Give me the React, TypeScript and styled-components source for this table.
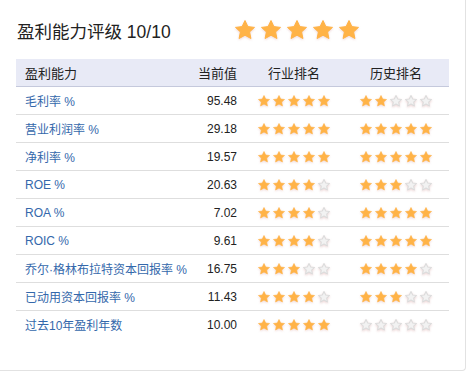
import React, { FunctionComponent } from "react";
import styled, { createGlobalStyle } from "styled-components";

const GlobalStyle = createGlobalStyle`
    body {
        margin: 0;
        background: #fff;
        font-family: "Liberation Sans", Arial, "Noto Sans CJK SC", sans-serif;
    }
`

interface Row {
    name: string;
    value: string;
    industry: number;
    history: number;
}

const rows: Row[] = [
    { name: "毛利率 %", value: "95.48", industry: 5, history: 2 },
    { name: "营业利润率 %", value: "29.18", industry: 5, history: 5 },
    { name: "净利率 %", value: "19.57", industry: 5, history: 5 },
    { name: "ROE %", value: "20.63", industry: 4, history: 3 },
    { name: "ROA %", value: "7.02", industry: 4, history: 5 },
    { name: "ROIC %", value: "9.61", industry: 4, history: 5 },
    { name: "乔尔·格林布拉特资本回报率 %", value: "16.75", industry: 3, history: 4 },
    { name: "已动用资本回报率 %", value: "11.43", industry: 4, history: 3 },
    { name: "过去10年盈利年数", value: "10.00", industry: 5, history: 0 },
];

const STAR = "12,2.5 14.9,8.6 21.5,9.4 16.6,13.9 17.9,20.5 12,17.2 6.1,20.5 7.4,13.9 2.5,9.4 9.1,8.6";

interface StarProps {
    on: boolean;
    size: number;
}

const Star: FunctionComponent<StarProps> = ({ on, size }) => (
    <StarSvg width={size} height={size} viewBox="0 0 24 24">
        <polygon
            points={STAR}
            fill={on ? "#ffb347" : "#f2f2f2"}
            stroke={on ? "#ffb347" : "#dcdcdc"}
            strokeWidth={on ? 1 : 1.8}
            strokeLinejoin="round"
        />
    </StarSvg>
);

const Stars: FunctionComponent<{ count: number; size?: number; big?: boolean }> = ({ count, size = 14, big }) => (
    <StarRow $big={big}>
        {[0, 1, 2, 3, 4].map(i => <Star key={i} on={i < count} size={size} />)}
    </StarRow>
);

const App: FunctionComponent = () => {
    return (
        <>
            <GlobalStyle />
            <Card>
                <TitleBar>
                    <Title>盈利能力评级 10/10</Title>
                    <Stars count={5} size={24} big />
                </TitleBar>
                <Table>
                    <HeadRow>
                        <HeadCell>盈利能力</HeadCell>
                        <HeadCell $align="right">当前值</HeadCell>
                        <HeadCell $align="center">行业排名</HeadCell>
                        <HeadCell $align="center">历史排名</HeadCell>
                    </HeadRow>
                    {rows.map((r, i) => (
                        <BodyRow key={r.name} $last={i === rows.length - 1}>
                            <Name>{r.name}</Name>
                            <Value>{r.value}</Value>
                            <StarCell><Stars count={r.industry} /></StarCell>
                            <StarCell><Stars count={r.history} /></StarCell>
                        </BodyRow>
                    ))}
                </Table>
            </Card>
        </>
    );
}

export default App;


const Card = styled.div`
    width: 466px;
    height: 371px;
    box-sizing: border-box;
    background: #fff;
    border-right: 1px solid #e2e2e2;
    border-bottom: 1px solid #e2e2e2;
    border-bottom-right-radius: 4px;
    padding: 0 16px 0 16px;
`

const TitleBar = styled.div`
    height: 59px;
    display: flex;
    align-items: center;
    padding-left: 1px;
`

const Title = styled.div`
    width: 216px;
    font-size: 17.5px;
    color: #222;
    padding-top: 1px;
`

const StarRow = styled.div<{ $big?: boolean }>`
    display: flex;
    align-items: center;
    gap: ${p => (p.$big ? "2px" : "1px")};
    filter: drop-shadow(0 1px 1px rgba(200, 120, 120, 0.3));
`

const StarSvg = styled.svg`
    display: block;
`

const Table = styled.div`
    width: 433px;
`

const grid = `
    display: grid;
    grid-template-columns: 181px 40px 114px 90px;
    padding-right: 8px;
    align-items: center;
`

const HeadRow = styled.div`
    ${grid}
    height: 27px;
    background: #e8eaf6;
    border-bottom: 1px solid #c5c9dc;
`

const HeadCell = styled.div<{ $align?: string }>`
    font-size: 13px;
    color: #222;
    text-align: ${p => p.$align || "left"};
    padding-left: ${p => (p.$align ? "0" : "9px")};
    white-space: nowrap;
`

const BodyRow = styled.div<{ $last?: boolean }>`
    ${grid}
    height: 27px;
    border-bottom: 1px solid ${p => (p.$last ? "transparent" : "#dedede")};
`

const Name = styled.div`
    font-size: 12px;
    color: #3468ab;
    padding-left: 9px;
    white-space: nowrap;
`

const Value = styled.div`
    font-size: 12px;
    color: #222;
    text-align: right;
`

const StarCell = styled.div`
    display: flex;
    justify-content: center;
`
